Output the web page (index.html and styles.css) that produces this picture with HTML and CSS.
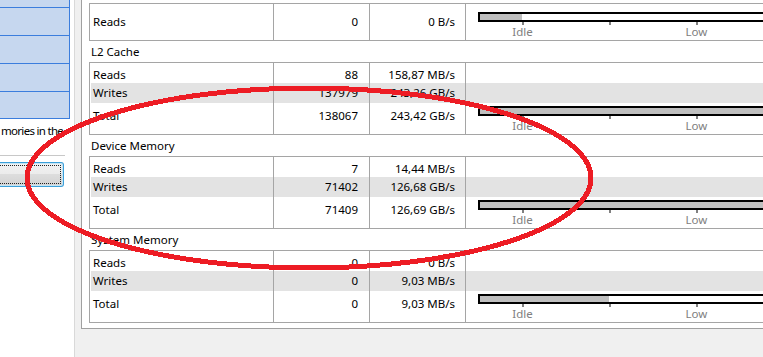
FILE: index.html
```html
<!DOCTYPE html>
<html lang="en">
<head>
    <meta charset="UTF-8">
    <title>Memory Statistics</title>
    <link rel="stylesheet" href="styles.css">
</head>
<body>
    <div class="side">
        <div class="list">
            <div class="item top"></div>
            <div class="item"></div>
            <div class="item"></div>
            <div class="item"></div>
            <div class="item last"></div>
        </div>
        <div class="hint">mories in the</div>
        <div class="rule"></div>
        <div class="button"><div class="focus"></div></div>
    </div>

    <div class="main">
        <div class="frame">
            <div class="table">
                <div class="row total first">
                    <div class="cell name">Reads</div>
                    <div class="cell num">0</div>
                    <div class="cell num">0 B/s</div>
                    <div class="cell meter">
                        <div class="bar"><div class="fill" style="width: 42px"></div></div>
                        <div class="scale">
                            <span class="tick">Idle</span><span class="tick"></span><span class="tick">Low</span><span class="tick"></span>
                        </div>
                    </div>
                </div>
            </div>

            <div class="caption">L2 Cache</div>
            <div class="table">
                <div class="row">
                    <div class="cell name">Reads</div>
                    <div class="cell num">88</div>
                    <div class="cell num">158,87 MB/s</div>
                    <div class="cell"></div>
                </div>
                <div class="row alt">
                    <div class="cell name">Writes</div>
                    <div class="cell num">137979</div>
                    <div class="cell num">243,26 GB/s</div>
                    <div class="cell"></div>
                </div>
                <div class="row total">
                    <div class="cell name">Total</div>
                    <div class="cell num">138067</div>
                    <div class="cell num">243,42 GB/s</div>
                    <div class="cell meter">
                        <div class="bar"><div class="fill" style="width: 100%"></div></div>
                        <div class="scale">
                            <span class="tick">Idle</span><span class="tick"></span><span class="tick">Low</span><span class="tick"></span>
                        </div>
                    </div>
                </div>
            </div>

            <div class="caption">Device Memory</div>
            <div class="table">
                <div class="row">
                    <div class="cell name">Reads</div>
                    <div class="cell num">7</div>
                    <div class="cell num">14,44 MB/s</div>
                    <div class="cell"></div>
                </div>
                <div class="row alt">
                    <div class="cell name">Writes</div>
                    <div class="cell num">71402</div>
                    <div class="cell num">126,68 GB/s</div>
                    <div class="cell"></div>
                </div>
                <div class="row total">
                    <div class="cell name">Total</div>
                    <div class="cell num">71409</div>
                    <div class="cell num">126,69 GB/s</div>
                    <div class="cell meter">
                        <div class="bar"><div class="fill" style="width: 100%"></div></div>
                        <div class="scale">
                            <span class="tick">Idle</span><span class="tick"></span><span class="tick">Low</span><span class="tick"></span>
                        </div>
                    </div>
                </div>
            </div>

            <div class="caption">System Memory</div>
            <div class="table">
                <div class="row">
                    <div class="cell name">Reads</div>
                    <div class="cell num">0</div>
                    <div class="cell num">0 B/s</div>
                    <div class="cell"></div>
                </div>
                <div class="row alt">
                    <div class="cell name">Writes</div>
                    <div class="cell num">0</div>
                    <div class="cell num">9,03 MB/s</div>
                    <div class="cell"></div>
                </div>
                <div class="row total">
                    <div class="cell name">Total</div>
                    <div class="cell num">0</div>
                    <div class="cell num">9,03 MB/s</div>
                    <div class="cell meter">
                        <div class="bar"><div class="fill" style="width: 129px"></div></div>
                        <div class="scale">
                            <span class="tick">Idle</span><span class="tick"></span><span class="tick">Low</span><span class="tick"></span>
                        </div>
                    </div>
                </div>
            </div>
        </div>
    </div>

    <!-- marker drawn over the screenshot -->
    <svg class="marker" width="763" height="357" viewBox="0 0 763 357">
        <ellipse cx="309" cy="178" rx="282" ry="90" fill="none" stroke="#ed1c24" stroke-width="5" shape-rendering="crispEdges"/>
    </svg>
</body>
</html>
```

FILE: styles.css
```css
body {
    margin: 0;
    width: 763px;
    height: 357px;
    overflow: hidden;
    display: flex;
    position: relative;
    background: #f0f0f0;
    font-family: "Noto Sans", "Open Sans", sans-serif;
    font-size: 11.5px;
    color: #000;
}

/* left panel */
.side {
    width: 74px;
    flex: none;
    overflow: hidden;
    background: #fff;
    border-right: 1px solid #d9d9d9;
}
.list {
    width: 69px;
    background: #c6d7ef;
    border-right: 1px solid #3b7ddd;
}
.item {
    height: 27px;
    border-bottom: 1px solid #3b7ddd;
}
.item.top {
    height: 7px;
}
.item.last {
    height: 26px;
}
.hint {
    padding: 4px 0 0 1px;
    line-height: 16px;
    letter-spacing: -0.7px;
    white-space: nowrap;
}
.rule {
    width: 65px;
    height: 1px;
    margin-top: 16px;
    background: #c8c8c8;
}
.button {
    width: 63px;
    height: 23px;
    margin-top: 6px;
    border: 1px solid #3c9fd8;
    border-left: none;
    border-radius: 0 3px 3px 0;
    background: linear-gradient(#f2f2f2 0%, #ebebeb 50%, #dddddd 50%, #d2d2d2 100%);
    box-shadow: inset -1px 1px 0 #c4e5f6, inset 0 -1px 0 #c4e5f6;
}
.focus {
    height: 17px;
    margin: 2px 2px 0 0;
    border: 1px dotted #222;
    border-left: none;
}

/* main panel */
.main {
    flex: 1;
    min-width: 0;
    overflow: hidden;
    padding-left: 6px;
}
.frame {
    width: 900px;
    padding: 3px 0 5px 7px;
    background: #fff;
    border: 1px solid #a0a0a0;
    border-top: none;
}
.caption {
    height: 21px;
    line-height: 21px;
    padding-left: 2px;
}
.table {
    border: 1px solid #a5a5a5;
    padding-left: 1px;
}
.row {
    display: grid;
    grid-template-columns: 183px 96px 96px 1fr;
    height: 20px;
}
.row.alt {
    background: #e3e3e3;
}
.row.total {
    height: 31px;
}
.row.first {
    height: 36px;
}
.cell {
    padding-top: 4px;
    line-height: 16px;
    white-space: nowrap;
}
.cell:nth-child(-n+3) {
    border-right: 1px solid #a5a5a5;
}
.row.alt .cell {
    padding-top: 0;
    line-height: 20px;
}
.row.total .cell {
    padding-top: 5px;
}
.row.first .cell {
    padding-top: 10px;
}
.name {
    padding-left: 2px;
}
.num {
    text-align: right;
}
.cell.num:nth-child(2) {
    padding-right: 11px;
}
.cell.num:nth-child(3) {
    padding-right: 10px;
}

/* load meter */
.row .cell.meter {
    overflow: hidden;
    padding: 3px 0 0 12px;
}
.row.first .cell.meter {
    padding-top: 8px;
}
.bar {
    width: 400px;
    height: 6px;
    border: 2px solid #000;
    background: #fff;
}
.fill {
    height: 100%;
    background: #bfbfbf;
}
.scale {
    display: flex;
    padding-left: 1px;
}
.tick {
    width: 87px;
    flex: none;
    display: flex;
    flex-direction: column;
    align-items: center;
    line-height: 14px;
    color: #808080;
}
.tick::before {
    content: "";
    width: 2px;
    height: 3px;
    background: #808080;
}

.marker {
    position: absolute;
    left: 0;
    top: 0;
    pointer-events: none;
}
```
